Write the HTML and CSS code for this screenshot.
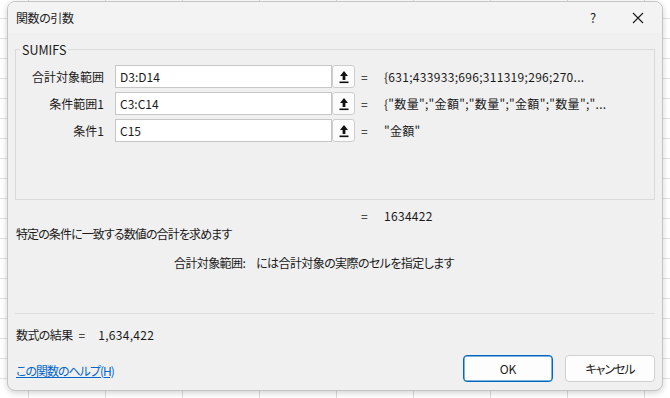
FILE: index.html
```html
<!DOCTYPE html>
<html lang="ja">
<head>
    <meta charset="UTF-8">
    <meta name="viewport" content="width=device-width, initial-scale=1.0">
    <title>関数の引数</title>
    <link rel="stylesheet" href="styles.css">
</head>
<body>
    <div class="dialog">
        <div class="titlebar">
            <span class="title">関数の引数</span>
            <span class="help">?</span>
            <span class="close">
                <svg width="12" height="12" viewBox="0 0 12 12"><path d="M1 1 L11 11 M11 1 L1 11" stroke="#1a1a1a" stroke-width="1.1" fill="none"/></svg>
            </span>
        </div>

        <div class="content">
            <fieldset class="group">
                <legend>SUMIFS</legend>

                <div class="arg-row">
                    <label for="arg1">合計対象範囲</label>
                    <div class="ref">
                        <input id="arg1" type="text" value="D3:D14">
                        <button class="collapse"><svg width="12" height="14" viewBox="0 0 12 14"><path d="M6 1 L2 6 H4.6 V10 H7.4 V6 H10 Z" fill="#111"/><rect x="1.5" y="11.5" width="9" height="1.6" fill="#111"/></svg></button>
                    </div>
                    <span class="eq">=</span>
                    <span class="val">{631;433933;696;311319;296;270...</span>
                </div>

                <div class="arg-row">
                    <label for="arg2">条件範囲1</label>
                    <div class="ref">
                        <input id="arg2" type="text" value="C3:C14">
                        <button class="collapse"><svg width="12" height="14" viewBox="0 0 12 14"><path d="M6 1 L2 6 H4.6 V10 H7.4 V6 H10 Z" fill="#111"/><rect x="1.5" y="11.5" width="9" height="1.6" fill="#111"/></svg></button>
                    </div>
                    <span class="eq">=</span>
                    <span class="val">{"数量";"金額";"数量";"金額";"数量";"...</span>
                </div>

                <div class="arg-row">
                    <label for="arg3">条件1</label>
                    <div class="ref">
                        <input id="arg3" type="text" value="C15">
                        <button class="collapse"><svg width="12" height="14" viewBox="0 0 12 14"><path d="M6 1 L2 6 H4.6 V10 H7.4 V6 H10 Z" fill="#111"/><rect x="1.5" y="11.5" width="9" height="1.6" fill="#111"/></svg></button>
                    </div>
                    <span class="eq">=</span>
                    <span class="val">"金額"</span>
                </div>
            </fieldset>

            <div class="total">
                <span class="eq">=</span>
                <span class="val">1634422</span>
            </div>

            <p class="desc">特定の条件に一致する数値の合計を求めます</p>
            <p class="param"><span class="param-name">合計対象範囲:</span><span>には合計対象の実際のセルを指定します</span></p>

            <hr class="sep">

            <div class="result"><span class="result-label">数式の結果</span>=<span class="result-val">1,634,422</span></div>

            <div class="footer">
                <a href="#" class="help-link">この関数のヘルプ(H)</a>
                <div class="buttons">
                    <button class="btn btn-ok">OK</button>
                    <button class="btn btn-cancel">キャンセル</button>
                </div>
            </div>
        </div>
    </div>
</body>
</html>
```

FILE: styles.css
```css
html, body {
    margin: 0;
    height: 100%;
}

body {
    font-family: "Noto Sans CJK JP", "Noto Sans", sans-serif;
    font-size: 12px;
    color: #1a1a1a;
    background-color: #fff;
    background-image:
        linear-gradient(to right, #dcdcdc 1px, transparent 1px),
        linear-gradient(to bottom, #e2e2e2 1px, transparent 1px);
    background-size: 77px 20px;
    background-position: 28px 0, 0 18px;
    overflow: hidden;
    font-feature-settings: "palt";
}

.dialog {
    width: 654px;
    height: 388px;
    margin: 1px 0 0 7px;
    background: #f0f0f0;
    border: 1px solid #c4c4c4;
    border-radius: 8px;
    box-shadow: 0 2px 6px rgba(0, 0, 0, 0.18);
    display: flex;
    flex-direction: column;
    overflow: hidden;
}

.titlebar {
    height: 31px;
    background: #f3f3f3;
    display: flex;
    align-items: center;
    padding-left: 8px;
}

.title {
    font-size: 12px;
    letter-spacing: -0.4px;
    flex: 1;
}

.help {
    font-size: 13px;
    width: 16px;
    margin-right: 26px;
}

.close {
    display: flex;
    margin-right: 18px;
}

.content {
    flex: 1;
    padding: 0 7px;
    display: flex;
    flex-direction: column;
}

.group {
    margin: 7px 0 0;
    padding: 6px 0 0;
    height: 160px;
    box-sizing: border-box;
    border: 1px solid #dadada;
}

.group legend {
    margin-left: 4px;
    padding: 0 2px;
    font-size: 12.5px;
}

.arg-row {
    display: flex;
    align-items: center;
    height: 23px;
    margin-bottom: 4px;
}

.arg-row label {
    width: 88px;
    text-align: right;
    margin-right: 11px;
}

.ref {
    display: flex;
    width: 240px;
}

.ref input {
    width: 217px;
    height: 23px;
    box-sizing: border-box;
    border: 1px solid #c6c6c6;
    background: #fff;
    padding: 0 4px;
    font: inherit;
    color: #1a1a1a;
    outline: none;
}

.collapse {
    width: 23px;
    height: 23px;
    box-sizing: border-box;
    border: 1px solid #cdcdcd;
    border-radius: 3px;
    background: #fbfbfb;
    padding: 0;
    display: flex;
    align-items: center;
    justify-content: center;
}

.eq {
    width: 29px;
    padding-left: 6px;
    box-sizing: border-box;
}

.val {
    white-space: nowrap;
    letter-spacing: 0.3px;
}

.total {
    display: flex;
    height: 16px;
    align-items: center;
    margin: 7px 0 0 340px;
}

.desc {
    margin: 3px 0 0 1px;
    line-height: 16px;
    letter-spacing: -0.9px;
}

.param {
    margin: 13px 0 0 159px;
    line-height: 16px;
    letter-spacing: -0.6px;
}

.param-name {
    margin-right: 11px;
}

.sep {
    margin: 42px 0 0;
    border: 0;
    border-top: 1px solid #dedede;
    height: 0;
}

.result {
    margin: 13px 0 0 1px;
    line-height: 16px;
}

.result-label {
    letter-spacing: -0.6px;
    margin-right: 6px;
}

.result-val {
    margin-left: 13px;
    letter-spacing: 0.3px;
}

.footer {
    display: flex;
    justify-content: space-between;
    align-items: center;
    margin-top: 12px;
}

.help-link {
    color: #0066cc;
    text-decoration: underline;
    margin-left: 1px;
    align-self: flex-end;
    margin-bottom: 3px;
    letter-spacing: -1px;
}

.buttons {
    display: flex;
    gap: 12px;
}

.btn {
    width: 90px;
    height: 27px;
    font: inherit;
    background: #fdfdfd;
    color: #1a1a1a;
    border: 1px solid #d0d0d0;
    border-radius: 4px;
}

.btn-ok {
    border-color: #0067c0;
    box-shadow: inset 0 0 0 0.5px #0067c0;
}

.btn-cancel {
    letter-spacing: -1px;
}
```
